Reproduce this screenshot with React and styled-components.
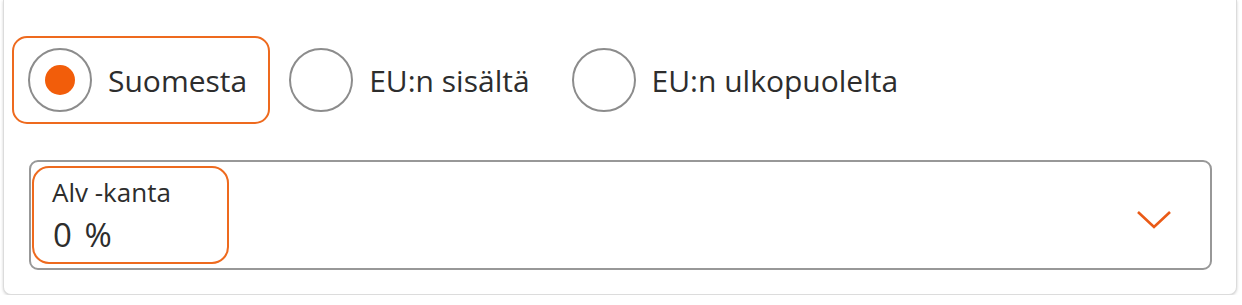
import React, { useState } from "react";
import styled, { createGlobalStyle } from "styled-components";

const Global = createGlobalStyle`
  html, body { margin: 0; padding: 0; background: #ffffff; }
  body { font-family: "Open Sans", "Noto Sans", sans-serif; color: #2b2b2b; }
  * { box-sizing: border-box; }
`;

const Card = styled.div`
  margin-left: 3px;
  width: 1234px;
  height: 295px;
  background: #fff;
  border: 1px solid #dcdcdc;
  border-top: none;
  border-radius: 0 0 8px 8px;
  box-shadow: 0 1px 3px rgba(0, 0, 0, 0.18);
  padding: 36px 24px 0 25px;
  display: flex;
  flex-direction: column;
  gap: 36px;
`;

const RadioRow = styled.div`
  display: flex;
  gap: 3px;
  margin-left: -17px;
`;

const Option = styled.label`
  display: flex;
  align-items: center;
  gap: 16px;
  height: 88px;
  padding: 0 21px 0 14px;
  border: 2px solid ${(p) => (p.$focused ? "#ee6a1e" : "transparent")};
  border-radius: 15px;
  cursor: pointer;
`;

const Circle = styled.span`
  width: 64px;
  height: 64px;
  border-radius: 50%;
  border: 2px solid #8c8c8c;
  display: flex;
  align-items: center;
  justify-content: center;
  flex-shrink: 0;
`;

const Dot = styled.span`
  width: 30px;
  height: 30px;
  border-radius: 50%;
  background: #f25d0a;
`;

const OptionText = styled.span`
  font-size: 30px;
  line-height: 40px;
  margin-top: 2px;
  color: #2d2d2d;
  white-space: nowrap;
`;

const Select = styled.div`
  height: 110px;
  border: 2px solid #989898;
  border-radius: 9px;
  display: flex;
  align-items: flex-start;
  justify-content: space-between;
  padding: 4px 38px 0 1px;
`;

const ValueBox = styled.div`
  width: 197px;
  height: 98px;
  border: 2px solid #ee6a1e;
  border-radius: 17px;
  padding: 9px 0 0 18px;
  display: flex;
  flex-direction: column;
`;

const Label = styled.span`
  font-size: 26px;
  line-height: 30px;
  color: #2d2d2d;
`;

const Value = styled.span`
  font-size: 33px;
  line-height: 36px;
  margin-left: 1px;
  margin-top: 10px;
  word-spacing: 4px;
  color: #2d2d2d;
`;

const Chevron = styled.svg`
  margin-top: 44px;
  width: 36px;
  height: 20px;
`;

const options = ["Suomesta", "EU:n sisältä", "EU:n ulkopuolelta"];

export default function App() {
  const [selected, setSelected] = useState(0);
  return (
    <>
      <Global />
      <Card>
        <RadioRow>
          {options.map((o, i) => (
            <Option key={o} $focused={i === selected} onClick={() => setSelected(i)}>
              <Circle>{i === selected && <Dot />}</Circle>
              <OptionText>{o}</OptionText>
            </Option>
          ))}
        </RadioRow>
        <Select>
          <ValueBox>
            <Label>Alv -kanta</Label>
            <Value>0 %</Value>
          </ValueBox>
          <Chevron viewBox="0 0 36 20">
            <path d="M2 2 L18 17 L34 2" fill="none" stroke="#ea5a16" strokeWidth="2.6" />
          </Chevron>
        </Select>
      </Card>
    </>
  );
}
